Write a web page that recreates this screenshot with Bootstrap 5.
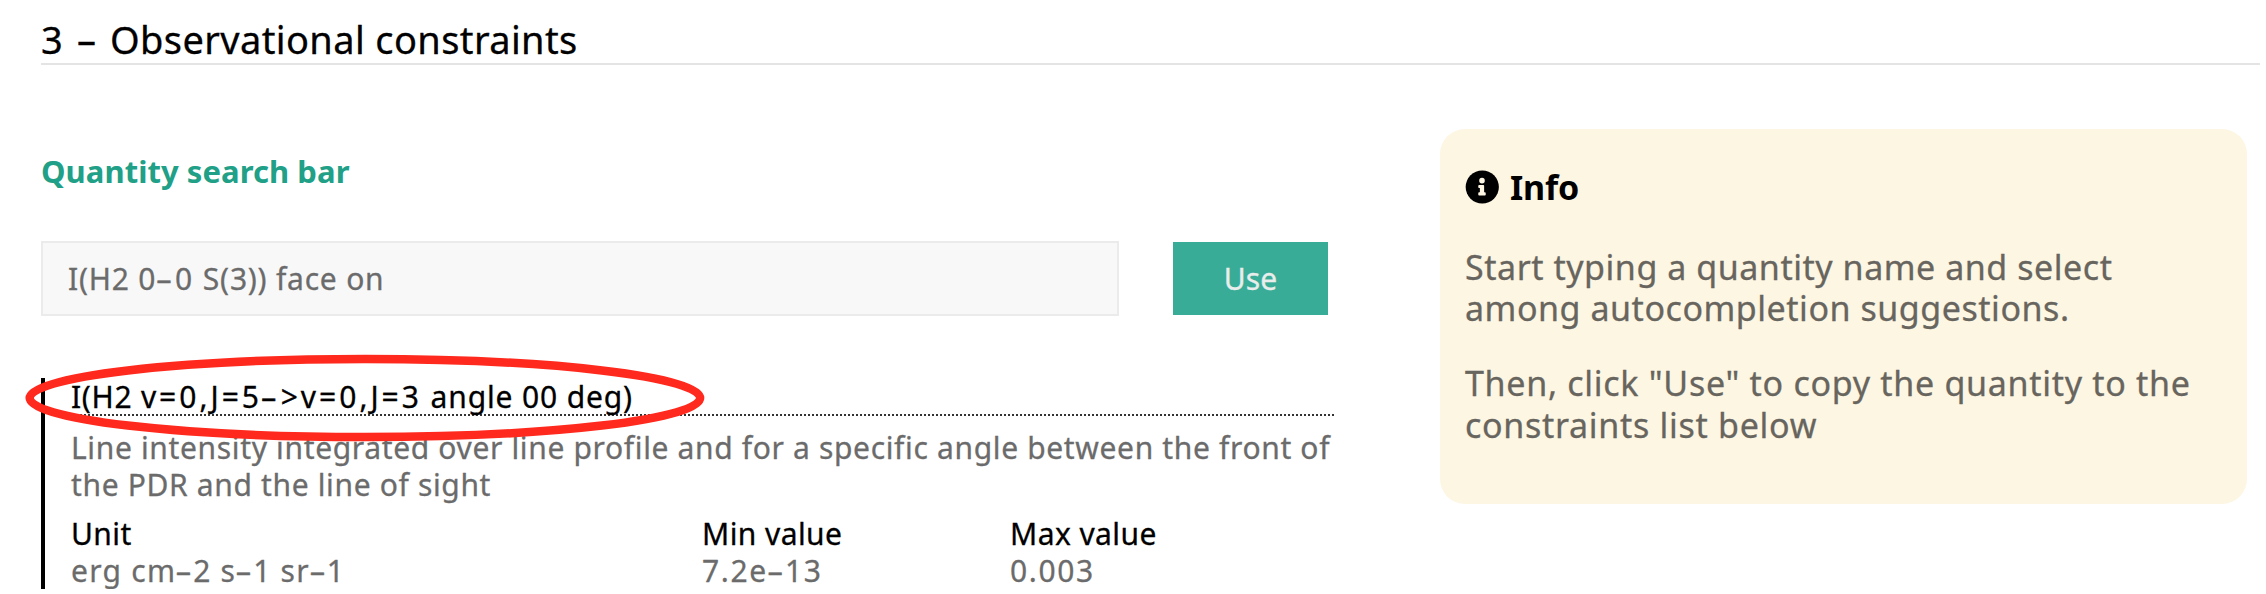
<!DOCTYPE html>
<html lang="en">
<head>
<meta charset="utf-8">
<title>Observational constraints</title>
<link href="https://cdn.jsdelivr.net/npm/bootstrap@5.3.0/dist/css/bootstrap.min.css" rel="stylesheet">
<style>
body{font-family:"Noto Sans","Open Sans",sans-serif;font-size:30px;line-height:37px;color:#6b6b6b;background:#fff;overflow:hidden;-webkit-text-stroke:.3px}
.page{padding:16px 6px 0 41px}
.section-title{font-size:38px;line-height:46px;letter-spacing:.38px;color:#000;border-bottom:2px solid #e4e4e4;padding-bottom:1px}
.title-no{word-spacing:3.5px}
.main-col{width:1293px;padding-top:86px}
.search-title{font-size:31px;line-height:40px;font-weight:700;letter-spacing:.06px;color:#20a086;margin-bottom:50px;-webkit-text-stroke:0}
.search-row{gap:54px;margin-bottom:62px}
.search-row .form-control{width:1078px;height:75px;border:2px solid #ebebeb;background:#f8f8f8;color:#6b6b6b;font-size:30px;letter-spacing:.78px;padding:0 25px}
.btn-use{width:155px;height:73px;background:#39ac97;color:#e9eeec;font-size:30px;letter-spacing:.1px;padding:0;border:0}
.quantity{border-left:4px solid #000;padding-left:26px;white-space:nowrap;height:211px}
.q-name{color:#000;border-bottom:2px dotted #333;height:38px}
.q-species{letter-spacing:.7px}
.q-formula{letter-spacing:3px}
.q-angle{letter-spacing:.85px}
.q-text{padding-top:13px;margin-bottom:12px;letter-spacing:.65px}
.q-values{display:grid;grid-template-columns:631px 308px 1fr;letter-spacing:.42px}
.q-values dt{font-weight:400;color:#000}
.q-values dd{margin:0;letter-spacing:1.25px}
.q-values .num{letter-spacing:1.6px}
.num{letter-spacing:2px}
.minus{display:inline-block;transform:scaleX(1.75);margin:0 3px}
.info-card{width:807px;height:375px;margin:64px 13px 0 0;border-radius:25px;background:#fdf6e3;padding:34px 25px 0;white-space:nowrap;font-size:34px;line-height:41.7px}
.info-card h2{font-size:34px;line-height:48px;font-weight:700;color:#000;margin:0 0 35.5px;gap:11px;letter-spacing:-.2px;-webkit-text-stroke:0}
.info-card p{margin:0 0 33px;letter-spacing:.54px;color:#67655e}
.info-card p + p{letter-spacing:.71px}
.ring{left:25px;top:354px;pointer-events:none}
</style>
</head>
<body>
<main class="page position-relative">
  <h1 class="section-title fw-normal m-0"><span class="title-no">3 – </span>Observational constraints</h1>
  <div class="d-flex justify-content-between align-items-start">
    <section class="main-col">
      <h2 class="search-title mt-0">Quantity search bar</h2>
      <div class="search-row d-flex align-items-center">
        <div class="form-control rounded-0 d-flex align-items-center"><span class="text-nowrap">I(H2 <span class="num">0<span class="minus">-</span>0</span> S(3)) face on</span></div>
        <button type="button" class="btn btn-use rounded-0">Use</button>
      </div>
      <article class="quantity">
        <div class="q-name"><span class="q-species">I(H2 </span><span class="q-formula">v=0,J=5<span class="minus">-</span>&gt;v=0,J=3</span><span class="q-angle"> angle 00 deg)</span></div>
        <div class="q-text">Line intensity integrated over line profile and for a specific angle between the front of<br>the PDR and the line of sight</div>
        <dl class="q-values m-0">
          <div><dt>Unit</dt><dd>erg cm<span class="minus">-</span>2 s<span class="minus">-</span>1 sr<span class="minus">-</span>1</dd></div>
          <div><dt>Min value</dt><dd class="num">7.2e<span class="minus">-</span>13</dd></div>
          <div><dt>Max value</dt><dd class="num">0.003</dd></div>
        </dl>
      </article>
    </section>
    <aside class="info-card">
      <h2 class="d-flex align-items-center">
        <svg width="34" height="34" viewBox="0 0 512 512" aria-hidden="true"><circle cx="260" cy="256" r="250" fill="#000"/><path fill="#fdf6e3" d="M256 118a42 42 0 1 1 0 84a42 42 0 1 1 0-84zM312 372c0 7-5 12-12 12h-88c-7 0-12-5-12-12v-24c0-7 5-12 12-12h12v-64h-12c-7 0-12-5-12-12v-24c0-7 5-12 12-12h64c7 0 12 5 12 12v100h12c7 0 12 5 12 12z"/></svg>
        <span>Info</span>
      </h2>
      <p>Start typing a quantity name and select<br>among autocompletion suggestions.</p>
      <p>Then, click "Use" to copy the quantity to the<br>constraints list below</p>
    </aside>
  </div>
  <svg class="ring position-absolute" width="680" height="88" viewBox="0 0 680 88" aria-hidden="true"><ellipse cx="339.9" cy="44" rx="335.2" ry="39" fill="none" stroke="#ff291d" stroke-width="8.5"/></svg>
</main>
<script src="https://cdn.jsdelivr.net/npm/bootstrap@5.3.0/dist/js/bootstrap.bundle.min.js"></script>
</body>
</html>
